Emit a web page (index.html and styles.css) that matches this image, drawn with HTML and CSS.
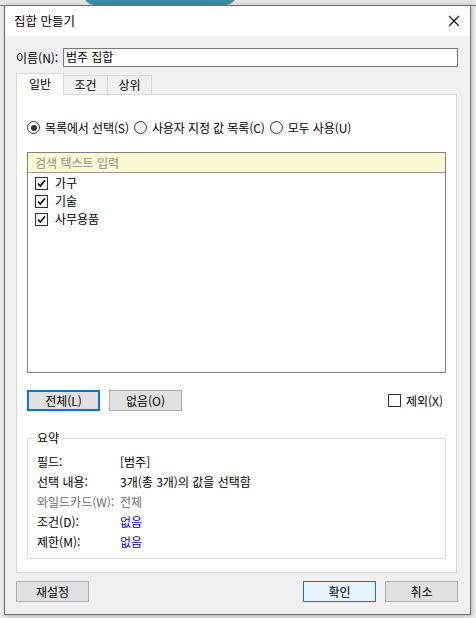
FILE: index.html
```html
<!DOCTYPE html>
<html lang="ko">
<head>
<meta charset="utf-8">
<link rel="stylesheet" href="styles.css">
</head>
<body>
<div class="backdrop">
  <div class="bg-pill"></div>
</div>
<div class="dialog">
  <div class="titlebar">
    <span class="title">집합 만들기</span>
    <svg class="close" width="12" height="12" viewBox="0 0 12 12"><path d="M1 1L11 11M11 1L1 11" stroke="#000" stroke-width="1.1" fill="none"/></svg>
  </div>
  <div class="body">
    <div class="name-row">
      <span class="label">이름(N):</span>
      <div class="input">범주 집합</div>
    </div>
    <div class="tabs">
      <div class="tab active">일반</div>
      <div class="tab">조건</div>
      <div class="tab">상위</div>
    </div>
    <div class="panel">
      <div class="radios">
        <span class="radio on"></span><span class="rlabel">목록에서 선택(S)</span>
        <span class="radio"></span><span class="rlabel">사용자 지정 값 목록(C)</span>
        <span class="radio"></span><span class="rlabel">모두 사용(U)</span>
      </div>
      <div class="listbox">
        <div class="search">검색 텍스트 입력</div>
        <div class="items">
          <div class="item"><span class="cb checked"><svg width="11" height="11" viewBox="0 0 11 11"><path d="M2 5.5L4.3 8L9 2.2" stroke="#000" stroke-width="1.6" fill="none"/></svg></span>가구</div>
          <div class="item"><span class="cb checked"><svg width="11" height="11" viewBox="0 0 11 11"><path d="M2 5.5L4.3 8L9 2.2" stroke="#000" stroke-width="1.6" fill="none"/></svg></span>기술</div>
          <div class="item"><span class="cb checked"><svg width="11" height="11" viewBox="0 0 11 11"><path d="M2 5.5L4.3 8L9 2.2" stroke="#000" stroke-width="1.6" fill="none"/></svg></span>사무용품</div>
        </div>
      </div>
      <div class="btn-row">
        <div class="btn default">전체(L)</div>
        <div class="btn">없음(O)</div>
        <div class="spacer"></div>
        <span class="cb"></span><span class="exclude">제외(X)</span>
      </div>
      <div class="group">
        <div class="legend">요약</div>
        <div class="srow"><span class="k">필드:</span><span class="v">[범주]</span></div>
        <div class="srow"><span class="k">선택 내용:</span><span class="v">3개(총 3개)의 값을 선택함</span></div>
        <div class="srow dim"><span class="k">와일드카드(W):</span><span class="v">전체</span></div>
        <div class="srow"><span class="k">조건(D):</span><span class="v link">없음</span></div>
        <div class="srow"><span class="k">제한(M):</span><span class="v link">없음</span></div>
      </div>
    </div>
    <div class="footer">
      <div class="btn">재설정</div>
      <div class="spacer"></div>
      <div class="btn ok">확인</div>
      <div class="btn">취소</div>
    </div>
  </div>
</div>
</body>
</html>
```
FILE: styles.css
```css
* { box-sizing: border-box; }
html, body { margin: 0; padding: 0; }
body {
  width: 476px;
  height: 618px;
  overflow: hidden;
  background: #ececec;
  font-family: "Noto Sans CJK KR", "Noto Sans", sans-serif;
  font-size: 12px;
  color: #000;
  position: relative;
}
.backdrop {
  position: absolute;
  left: 0; top: 0; width: 476px; height: 6px;
  background: #e4e4e4;
  border-bottom: 1px solid #7a7a7a;
}
.bg-pill {
  position: absolute;
  left: 84px; top: -10px; width: 152px; height: 15px;
  background: #3f8aa6;
  border-radius: 0 0 10px 10px;
}
.dialog {
  position: relative;
  margin: 5px 0 0 4px;
  width: 467px;
  height: 610px;
  background: #f0f0f0;
  border: 1px solid #6f6f6f;
  box-shadow: 1px 1px 4px rgba(0,0,0,0.25);
}
.titlebar {
  height: 30px;
  background: #fff;
  display: flex;
  align-items: center;
  padding-left: 9px;
  padding-right: 10px;
}
.title { font-size: 12.5px; line-height: 16px; }
.close { margin-left: auto; }
.body { padding: 12px 12px 0 11px; }
.name-row { display: flex; align-items: center; height: 19px; }
.label { width: 47px; padding-left: 0; line-height: 16px; }
.input {
  width: 396px;
  height: 19px;
  border: 1px solid #7a7a7a;
  background: #fff;
  padding-left: 2px;
  line-height: 16px;
}
.tabs { display: flex; align-items: flex-end; margin-top: 6px; height: 21px; position: relative; z-index: 1; }
.tab {
  height: 19px;
  border: 1px solid #d9d9d9;
  border-bottom: none;
  background: #f0f0f0;
  width: 45px;
  text-align: center;
  line-height: 17px;
  margin-left: -1px;
}
.tab:first-child { margin-left: 0; }
.tab.active {
  width: 48px;
  background: #fff;
  line-height: 20px;
  margin-bottom: -1px;
  height: 22px;
}
.panel {
  width: 441px;
  height: 479px;
  background: #fff;
  border: 1px solid #d9d9d9;
  padding: 24px 10px 0 10px;
}
.radios { display: flex; align-items: center; height: 17px; }
.radio {
  width: 13px; height: 13px;
  border: 1px solid #333;
  border-radius: 50%;
  margin-left: 4px;
  margin-right: 5px;
  position: relative;
  flex: none;
}
.radio:first-child { margin-left: 0; }
.radio.on::after {
  content: "";
  position: absolute;
  left: 2.5px; top: 2.5px;
  width: 6px; height: 6px;
  border-radius: 50%;
  background: #333;
}
.rlabel { line-height: 16px; margin-right: 1px; letter-spacing: -0.1px; }
.listbox {
  margin-top: 16px;
  width: 419px;
  height: 221px;
  border: 1px solid #828282;
}
.search {
  height: 20px;
  background: #fafad2;
  border-bottom: 1px solid #9a9a9a;
  color: #8a8a8a;
  padding-left: 7px;
  line-height: 19px;
}
.items { padding: 1px 0 0 7px; }
.item { display: flex; align-items: center; height: 18px; line-height: 16px; }
.cb {
  width: 13px; height: 13px;
  border: 1px solid #333;
  background: #fff;
  margin-right: 7px;
  display: flex;
  align-items: center;
  justify-content: center;
  flex: none;
}
.btn-row { display: flex; align-items: center; margin-top: 17px; height: 21px; }
.btn {
  width: 73px;
  height: 21px;
  background: #e1e1e1;
  border: 1px solid #adadad;
  text-align: center;
  line-height: 19px;
  margin-right: 9px;
}
.btn.default { border: 2px solid #0078d7; line-height: 17px; }
.spacer { flex: 1; }
.btn-row .cb { margin-right: 5px; }
.exclude { line-height: 16px; margin-right: 3px; }
.group {
  margin-top: 27px;
  width: 419px;
  height: 121px;
  border: 1px solid #dcdcdc;
  position: relative;
  padding: 13px 0 0 9px;
}
.legend {
  position: absolute;
  left: 6px; top: -9px;
  background: #fff;
  padding: 0 3px;
  line-height: 16px;
}
.srow { display: flex; height: 20px; align-items: center; line-height: 16px; }
.k { width: 83px; }
.dim { color: #6d6d6d; }
.link { color: #0000ee; }
.footer { display: flex; margin-top: 8px; }
.footer .btn { width: 73px; }
.footer .btn:last-child { margin-right: 0; }
.btn.ok { background: #e5f1fb; border-color: #0078d7; }
```
